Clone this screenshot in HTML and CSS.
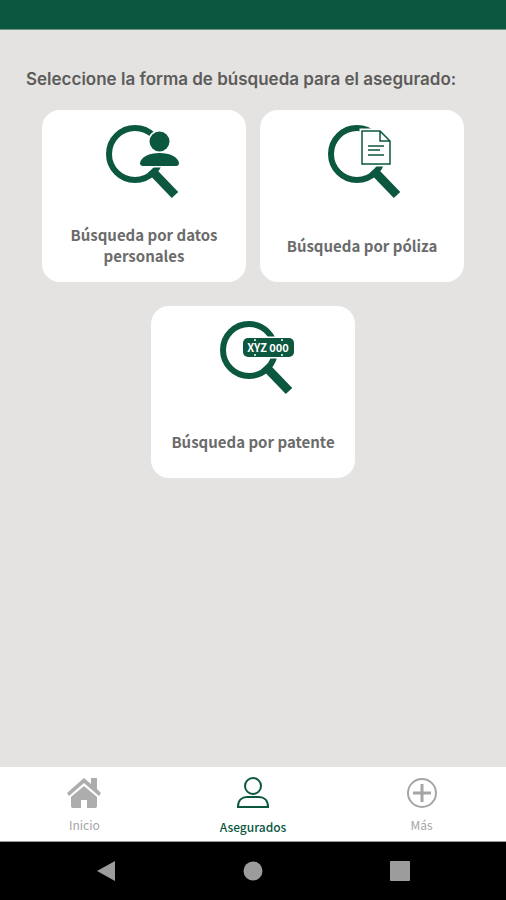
FILE: index.html
```html
<!DOCTYPE html>
<html lang="es">
  <head>
    <title>Asegurados</title>
    <meta charset="UTF-8">
    <meta name="viewport" content="width=device-width, initial-scale=1">
    <link rel="stylesheet" href="styles.css">
  </head>
  <body>
    <header class="status-bar"></header>
    <main class="content">
        <h1 class="title">Seleccione la forma de búsqueda para el asegurado:</h1>
        <div class="cards">
            <button class="card" type="button">
                <svg class="card-icon" viewBox="0 0 80 76" aria-hidden="true">
                    <circle class="lens" cx="31" cy="30" r="26"/>
                    <path class="handle" d="M47 46l24 25"/>
                    <path class="cutout" d="M36 39c1-6 9-10 19.500-10s18.500 4 19.500 10c0 2-1 3-3 3H39c-2 0-3-1-3-3z"/>
                    <circle class="cutout" cx="55.500" cy="17.500" r="10"/>
                </svg>
                <span class="card-label">Búsqueda por datos personales</span>
            </button>
            <button class="card" type="button">
                <svg class="card-icon" viewBox="0 0 80 76" aria-hidden="true">
                    <circle class="lens" cx="35" cy="30" r="26"/>
                    <path class="handle" d="M51 46l24 25"/>
                    <path class="sheet-edge" d="M40 7h18l10 10v23H40z"/>
                    <path class="sheet" d="M40 7h18l10 10v23H40zM58 7v10h10"/>
                    <path class="sheet-lines" d="M46 22h16M46 26h12M46 31h16"/>
                </svg>
                <span class="card-label">Búsqueda por póliza</span>
            </button>
            <button class="card" type="button">
                <svg class="card-icon" viewBox="0 0 80 76" aria-hidden="true">
                    <circle class="lens" cx="36" cy="30" r="26"/>
                    <path class="handle" d="M52 46l24 25"/>
                    <rect class="cutout" x="30" y="18" width="51" height="19" rx="5"/>
                    <text class="plate" x="55" y="32" text-anchor="middle">XYZ 000</text>
                    <path class="bolts" d="M41 20h2M68 20h2M41 35h2M68 35h2"/>
                </svg>
                <span class="card-label">Búsqueda por patente</span>
            </button>
        </div>
    </main>
    <nav class="tabs">
        <button class="tab" type="button">
            <svg class="tab-icon home" viewBox="0 0 36 32" aria-hidden="true">
                <path d="M18 1l7 6V1h6v11l4 4-2 3L18 6 3 19l-2-3z"/>
                <path d="M18 9l13 11v9q0 2-2 2h-8v-8h-6v8H7q-2 0-2-2v-9z"/>
            </svg>
            <span>Inicio</span>
        </button>
        <button class="tab active" type="button">
            <svg class="tab-icon line" viewBox="0 0 36 32" aria-hidden="true">
                <circle cx="18" cy="9" r="8"/>
                <path d="M3 30c0-7 4-10 9-10h12c5 0 9 3 9 10z"/>
            </svg>
            <span>Asegurados</span>
        </button>
        <button class="tab" type="button">
            <svg class="tab-icon line" viewBox="0 0 36 32" aria-hidden="true">
                <circle cx="18" cy="16" r="14"/>
                <path class="plus" d="M9 16h18M18 7v18"/>
            </svg>
            <span>Más</span>
        </button>
    </nav>
    <footer class="system-bar">
        <button class="key" type="button" aria-label="Atrás">
            <svg viewBox="0 0 24 24"><path d="M3 12L21 2v20z"/></svg>
        </button>
        <button class="key" type="button" aria-label="Pantalla principal">
            <svg viewBox="0 0 24 24"><circle cx="12" cy="12" r="9.5"/></svg>
        </button>
        <button class="key" type="button" aria-label="Recientes">
            <svg viewBox="0 0 24 24"><rect x="2" y="2" width="20" height="20" rx="1"/></svg>
        </button>
    </footer>
  </body>
</html>
```
FILE: styles.css
```css
*{
    margin: 0;
    padding: 0;
    box-sizing: border-box;
}
body{
    min-height: 100vh;
    display: flex;
    flex-direction: column;
    background: #e5e3e1;
    font-family: "Noto Sans CJK JP", "Noto Sans", sans-serif;
}
button{
    border: none;
    background: none;
    font-family: inherit;
    cursor: pointer;
}
.status-bar{
    height: 30px;
    background: #0c573f;
    border-bottom: 1px solid #6f9484;
}
.content{
    flex: 1;
    padding: 36px 26px;
}
.title{
    font-family: Inter, sans-serif;
    font-size: 17px;
    font-weight: 600;
    line-height: 26px;
    color: #5c5c5b;
}
.cards{
    margin-top: 18px;
    display: flex;
    flex-wrap: wrap;
    justify-content: center;
    gap: 24px 14px;
}
.card{
    width: 204px;
    min-height: 172px;
    padding: 14px 16px 16px;
    display: flex;
    flex-direction: column;
    align-items: center;
    justify-content: space-between;
    border-radius: 18px;
    background: #fff;
}
.card-icon{
    width: 80px;
    height: 76px;
    overflow: visible;
}
.card-label{
    min-height: 42px;
    display: flex;
    align-items: center;
    font-size: 15px;
    font-weight: 700;
    line-height: 21px;
    color: #6b6b6b;
}
.lens{
    fill: none;
    stroke: #0c573f;
    stroke-width: 6;
}
.handle{
    stroke: #0c573f;
    stroke-width: 9;
}
.cutout{
    fill: #0c573f;
    stroke: #fff;
    stroke-width: 3;
    paint-order: stroke;
}
.sheet-edge{
    fill: #fff;
    stroke: #fff;
    stroke-width: 5;
}
.sheet{
    fill: none;
    stroke: #0c573f;
    stroke-width: 1.5;
}
.sheet-lines{
    stroke: #0c573f;
    stroke-width: 1.5;
}
.plate{
    fill: #fff;
    font-size: 11px;
    font-weight: 700;
}
.bolts{
    stroke: #fff;
    stroke-width: 1.5;
}
.tabs{
    height: 75px;
    display: flex;
    background: #fff;
    border-bottom: 1px solid #999;
}
.tab{
    flex: 1;
    padding-top: 10px;
    display: flex;
    flex-direction: column;
    align-items: center;
    gap: 8px;
    font-size: 12px;
    line-height: 16px;
    color: #a5a5a5;
}
.tab-icon{
    width: 36px;
    height: 32px;
}
.home{
    fill: #adadad;
}
.line{
    fill: none;
    stroke: currentColor;
    stroke-width: 2;
}
.plus{
    stroke-width: 3;
}
.active{
    gap: 10px;
    font-weight: 500;
    color: #0c573f;
}
.system-bar{
    height: 58px;
    padding: 0 32px;
    display: flex;
    background: #000;
}
.key{
    flex: 1;
    display: flex;
    align-items: center;
    justify-content: center;
}
.key svg{
    width: 24px;
    height: 24px;
    fill: #9c9c9c;
}
```
